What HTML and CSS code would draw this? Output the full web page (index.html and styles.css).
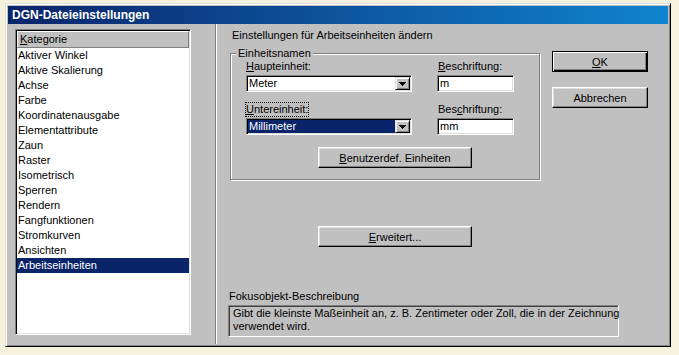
FILE: index.html
```html
<!DOCTYPE html>
<html lang="de">
<head>
<meta charset="utf-8">
<title>DGN-Dateieinstellungen</title>
<link rel="stylesheet" href="styles.css">
</head>
<body>
<div class="window">
  <div class="titlebar">DGN-Dateieinstellungen</div>
  <div class="content">
    <div class="left-pane">
      <div class="listbox">
        <div class="list-header"><u>K</u>ategorie</div>
        <ul class="list">
          <li>Aktiver Winkel</li>
          <li>Aktive Skalierung</li>
          <li>Achse</li>
          <li>Farbe</li>
          <li>Koordinatenausgabe</li>
          <li>Elementattribute</li>
          <li>Zaun</li>
          <li>Raster</li>
          <li>Isometrisch</li>
          <li>Sperren</li>
          <li>Rendern</li>
          <li>Fangfunktionen</li>
          <li>Stromkurven</li>
          <li>Ansichten</li>
          <li class="selected">Arbeitseinheiten</li>
        </ul>
      </div>
    </div>
    <div class="splitter"></div>
    <div class="right-pane">
      <div class="top-row">
        <div class="main-col">
          <div class="heading">Einstellungen für Arbeitseinheiten ändern</div>
          <div class="group">
            <div class="group-title">Einheitsnamen</div>
            <div class="unit-grid">
              <div class="label"><u>H</u>aupteinheit:</div>
              <div class="label label-right"><u>B</u>eschriftung:</div>
              <div class="combo">
                <span class="combo-text">Meter</span>
                <span class="drop-btn"><svg width="7" height="4" viewBox="0 0 7 4"><path d="M0 0h7v1H0zM1 1h5v1H1zM2 2h3v1H2zM3 3h1v1H3z" fill="#000"/></svg></span>
              </div>
              <div class="textbox">m</div>
              <div class="label second"><span class="focus"><u>U</u>ntereinheit:</span></div>
              <div class="label label-right second">Bes<u>c</u>hriftung:</div>
              <div class="combo active">
                <span class="combo-text">Millimeter</span>
                <span class="drop-btn"><svg width="7" height="4" viewBox="0 0 7 4"><path d="M0 0h7v1H0zM1 1h5v1H1zM2 2h3v1H2zM3 3h1v1H3z" fill="#000"/></svg></span>
              </div>
              <div class="textbox">mm</div>
            </div>
            <div class="btn btn-custom"><span><u>B</u>enutzerdef. Einheiten</span></div>
          </div>
          <div class="btn btn-adv"><span><u>E</u>rweitert...</span></div>
        </div>
        <div class="button-col">
          <div class="btn btn-default"><span><u>O</u>K</span></div>
          <div class="btn"><span>Abbrechen</span></div>
        </div>
      </div>
      <div class="desc-label">Fokusobjekt-Beschreibung</div>
      <div class="desc-box">Gibt die kleinste Maßeinheit an, z. B. Zentimeter oder Zoll, die in der Zeichnung<br>verwendet wird.</div>
    </div>
  </div>
</div>
</body>
</html>
```

FILE: styles.css
```css
* { box-sizing: border-box; }
html, body { margin: 0; padding: 0; }
body {
  background: #f4f2dc;
  font-family: "Liberation Sans", Arial, sans-serif;
  font-size: 11px;
  color: #000;
  width: 679px;
  height: 355px;
  overflow: hidden;
}
u { text-decoration: underline; text-underline-offset: 1px; }

.window {
  margin: 3px 0 0 5px;
  width: 666px;
  height: 344px;
  background: #c0c0c0;
  border: 1px solid;
  border-color: #dfdfdf #000 #000 #dfdfdf;
  box-shadow: inset 1px 1px 0 #fff, inset -1px -1px 0 #808080;
  padding: 2px;
  display: flex;
  flex-direction: column;
}
.titlebar {
  flex: none;
  height: 18px;
  line-height: 18px;
  padding-left: 4px;
  color: #fff;
  font-weight: bold;
  font-size: 12px;
  background: linear-gradient(90deg, #0a246a, #1084d0);
}
.content { flex: 1; display: flex; }

.left-pane { flex: none; width: 207px; padding: 5px 0 0 7px; }
.listbox {
  width: 176px;
  height: 306px;
  background: #fff;
  border: 1px solid;
  border-color: #808080 #fff #fff #808080;
  box-shadow: inset 1px 1px 0 #000, inset -1px -1px 0 #dfdfdf;
  padding: 1px;
}
.list-header {
  height: 17px;
  line-height: 14px;
  padding-left: 2px;
  background: #c0c0c0;
  border: 1px solid;
  border-color: #fff #808080 #808080 #fff;
}
.list { list-style: none; margin: 0; padding: 0; }
.list li { height: 15px; line-height: 15px; padding-left: 1px; white-space: nowrap; }
.list li.selected { background: #0a246a; color: #fff; }

.splitter { flex: none; width: 2px; border-left: 1px solid #808080; border-right: 1px solid #fff; }

.right-pane { flex: 1; padding: 5px 0 0 13px; display: flex; flex-direction: column; }
.top-row { display: flex; }
.main-col { flex: none; width: 311px; }
.heading { margin-left: 2px; line-height: 13px; white-space: nowrap; }

.group {
  margin-top: 11px;
  width: 310px;
  border: 1px solid #808080;
  box-shadow: 1px 1px 0 #fff, inset 1px 1px 0 #fff;
  padding: 0 0 11px 0;
}
.group-title {
  width: max-content;
  margin: -7px 0 0 5px;
  padding: 0 2px;
  background: #c0c0c0;
  line-height: 13px;
}
.unit-grid {
  display: grid;
  grid-template-columns: 166px 77px;
  column-gap: 25px;
  padding-left: 15px;
}
.label { height: 13px; line-height: 13px; white-space: nowrap; }
.label-right { padding-left: 1px; }
.label.second { margin-top: 11px; }
.focus { display: inline-block; outline: 1px dotted #000; line-height: 13px; }

.combo, .textbox {
  height: 17px;
  margin-top: 2px;
  border: 1px solid;
  border-color: #808080 #fff #fff #808080;
  box-shadow: inset 1px 1px 0 #000, inset -1px -1px 0 #dfdfdf;
  padding: 1px;
  background: #fff;
}
.combo { display: flex; }
.combo-text { flex: 1; padding-left: 1px; line-height: 13px; }
.combo.active .combo-text { background: #0a246a; color: #fff; }
.drop-btn {
  flex: none;
  width: 15px;
  height: 13px;
  background: #c0c0c0;
  border: 1px solid;
  border-color: #dfdfdf #000 #000 #dfdfdf;
  box-shadow: inset 1px 1px 0 #fff, inset -1px -1px 0 #808080;
  display: flex;
  align-items: center;
  justify-content: center;
}
.drop-btn svg { display: block; }
.textbox { padding-left: 2px; line-height: 13px; }

.btn {
  height: 21px;
  display: flex;
  align-items: center;
  justify-content: center;
  background: #c0c0c0;
  border: 1px solid;
  border-color: #fff #000 #000 #fff;
  box-shadow: inset -1px -1px 0 #808080, inset 1px 1px 0 #dfdfdf;
  white-space: nowrap;
}
.btn-custom { width: 154px; margin: 12px 0 0 87px; }
.btn-adv { width: 154px; margin: 46px 0 0 88px; }
.button-col { flex: none; width: 96px; margin: 22px 0 0 11px; display: flex; flex-direction: column; gap: 15px; }
.btn-default {
  border-color: #000;
  box-shadow: inset 1px 1px 0 #fff, inset -1px -1px 0 #000, inset -2px -2px 0 #808080;
}

.desc-label { margin: 43px 0 0 -1px; line-height: 13px; }
.desc-box {
  margin: 2px 0 0 -2px;
  width: 391px;
  height: 32px;
  border: 1px solid;
  border-color: #808080 #fff #fff #808080;
  box-shadow: inset 1px 1px 0 #404040;
  padding: 1px 0 0 4px;
  line-height: 13px;
  white-space: nowrap;
}
```
